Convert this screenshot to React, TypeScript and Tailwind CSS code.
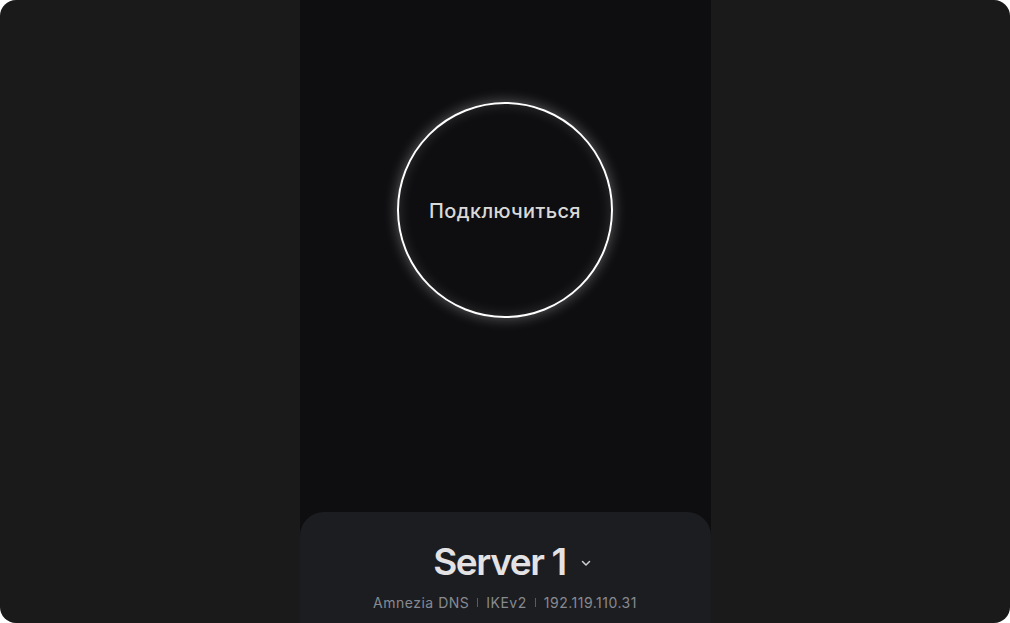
import React from "react";

export default function App() {
  return (
    <div className="w-[1010px] h-[623px] bg-white overflow-hidden" style={{ fontFamily: "Inter, 'Noto Sans', sans-serif" }}>
      <div className="w-full h-full rounded-[16px] bg-[#1a1a1a] overflow-hidden flex justify-center">
        <div className="w-[411px] h-full bg-[#0e0e11] flex flex-col">
          <div className="flex-1 flex flex-col items-center pt-[102px]">
            <button className="w-[216px] h-[216px] rounded-full border-2 border-white flex items-center justify-center shadow-[0_0_14px_rgba(255,255,255,0.35),inset_0_0_14px_rgba(255,255,255,0.15)]">
              <span className="text-[20px] font-medium text-[#d9d9d9] tracking-[0.35px] mt-[2px]">Подключиться</span>
            </button>
          </div>
          <div className="h-[111px] bg-[#1c1d21] rounded-t-[24px] flex flex-col items-center pt-[28px]">
            <div className="flex items-center gap-[14px] pl-[15px]">
              <span className="text-[37px] leading-[44px] font-semibold text-[#e3e3e6] tracking-[-1.4px]">Server 1</span>
              <svg width="12" height="12" viewBox="0 0 12 12" fill="none" className="mt-[2px]">
                <path d="M2.5 4.5L6 8L9.5 4.5" stroke="#d0d0d4" strokeWidth="1.5" strokeLinecap="round" strokeLinejoin="round" />
              </svg>
            </div>
            <div className="flex items-center gap-[8px] mt-[8px] text-[14px] text-[#878a90] tracking-[0.5px]">
              <span>Amnezia DNS</span>
              <span className="w-px h-[9px] bg-[#5a5c61]" />
              <span>IKEv2</span>
              <span className="w-px h-[9px] bg-[#5a5c61]" />
              <span>192.119.110.31</span>
            </div>
          </div>
        </div>
      </div>
    </div>
  );
}
